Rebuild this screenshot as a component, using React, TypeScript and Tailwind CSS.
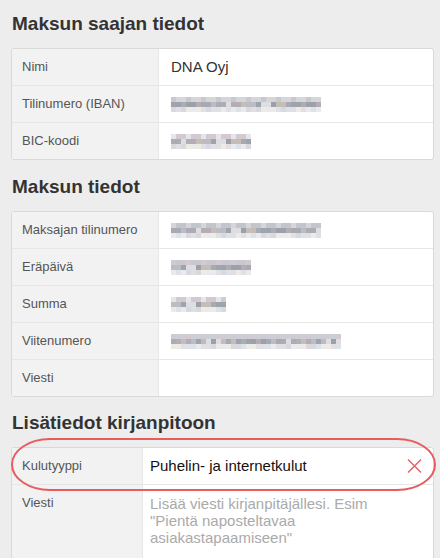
import React from "react";

const FONT = "font-['Liberation_Sans',Arial,sans-serif]";

const LIGHT = ["bg-[#c8c8ce]", "bg-[#d6d6da]", "bg-[#c2c6cc]", "bg-[#dad4d0]", "bg-[#ccced6]", "bg-[#e6e6ea]", "bg-[#d2cad0]"];
const DARK = ["bg-[#acacb4]", "bg-[#9ea4ae]", "bg-[#bcbcc2]", "bg-[#a8aab2]", "bg-[#c4beb6]", "bg-[#b4aeb4]", "bg-[#9ca0a8]", "bg-[#dedee2]"];
const PALE = ["bg-[#e0e0e4]", "bg-[#eaeaee]", "bg-[#d8d8de]", "bg-[#eeebe6]", "bg-[#dce2ea]"];

function Blur({ w, seed }: { w: number; seed: number }) {
  const cols = Math.round(w / 5);
  const pick = (arr: string[], i: number, r: number) => arr[(i * 7 + r * 13 + seed * 5 + ((i * i + seed) % 3)) % arr.length];
  return (
    <div className="flex flex-col">
      {[LIGHT, DARK, PALE].map((pal, r) => (
        <div key={r} className="flex">
          {Array.from({ length: cols }).map((_, i) => (
            <div key={i} className={`w-[5px] h-[5px] ${pick(pal, i, r)}`} />
          ))}
        </div>
      ))}
    </div>
  );
}

type Row = { label: string; value?: string; blur?: number };

function InfoCard({ rows }: { rows: Row[] }) {
  return (
    <div className="bg-white border border-[#d9d9d9] rounded-[3px] overflow-hidden">
      {rows.map((r, i) => (
        <div key={r.label} className={`flex ${i > 0 ? "h-[37px] border-t border-[#e6e6e6]" : "h-[36px]"}`}>
          <div className="w-[147px] shrink-0 bg-[#f2f2f2] border-r border-[#e6e6e6] flex items-center pl-[10px] text-[13px] text-[#555]">
            {r.label}
          </div>
          <div className="flex-1 flex items-center pl-[12px] text-[15px] text-[#333]">
            {r.value}
            {r.blur ? <Blur w={r.blur} seed={i + r.blur} /> : null}
          </div>
        </div>
      ))}
    </div>
  );
}

function Heading({ children }: { children: React.ReactNode }) {
  return <h2 className="text-[19px] leading-[21px] font-bold text-[#333] pl-[1px]">{children}</h2>;
}

export default function App() {
  return (
    <div className={`${FONT} h-[558px] overflow-hidden bg-[#ededed] pl-[11px] pr-[6px] pt-[13px]`}>
      <Heading>Maksun saajan tiedot</Heading>
      <div className="mt-[14px]">
        <InfoCard
          rows={[
            { label: "Nimi", value: "DNA Oyj" },
            { label: "Tilinumero (IBAN)", blur: 150 },
            { label: "BIC-koodi", blur: 80 },
          ]}
        />
      </div>

      <div className="mt-[16px]">
        <Heading>Maksun tiedot</Heading>
      </div>
      <div className="mt-[14px]">
        <InfoCard
          rows={[
            { label: "Maksajan tilinumero", blur: 150 },
            { label: "Eräpäivä", blur: 80 },
            { label: "Summa", blur: 55 },
            { label: "Viitenumero", blur: 170 },
            { label: "Viesti" },
          ]}
        />
      </div>

      <div className="mt-[15px]">
        <Heading>Lisätiedot kirjanpitoon</Heading>
      </div>
      <div className="relative mt-[14px]">
        <div className="bg-white border border-[#d9d9d9] rounded-[3px]">
          <div className="flex h-[36px]">
            <div className="w-[131px] shrink-0 bg-[#f2f2f2] border-r border-[#e6e6e6] flex items-center pl-[10px] text-[13px] text-[#555]">
              Kulutyyppi
            </div>
            <div className="flex-1 flex items-center pl-[7px] pr-[11px] text-[15px] text-[#111]">
              <span className="flex-1">Puhelin- ja internetkulut</span>
              <svg width="15" height="14" viewBox="0 0 15 14" className="text-[#e8646c]">
                <path d="M1 0.5 L14 13.5 M14 0.5 L1 13.5" stroke="currentColor" strokeWidth="1.5" fill="none" />
              </svg>
            </div>
          </div>
          <div className="flex h-[120px] border-t border-[#e6e6e6]">
            <div className="w-[131px] shrink-0 bg-[#f2f2f2] border-r border-[#e6e6e6] pl-[10px] pt-[8px] text-[13px] text-[#555]">
              Viesti
            </div>
            <div className="flex-1 pl-[7px] pt-[10px]">
              <p className="w-[240px] text-[15px] leading-[17px] text-[#aaa]">
                Lisää viesti kirjanpitäjällesi. Esim "Pientä naposteltavaa asiakastapaamiseen"
              </p>
            </div>
          </div>
        </div>
        <svg className="absolute left-0 top-[-9px] pointer-events-none" width="425" height="53" viewBox="0 0 425 53">
          <rect x="1" y="1" width="423" height="51" rx="38" ry="25.5" fill="none" stroke="#e85c5e" strokeWidth="2" />
        </svg>
      </div>
    </div>
  );
}
